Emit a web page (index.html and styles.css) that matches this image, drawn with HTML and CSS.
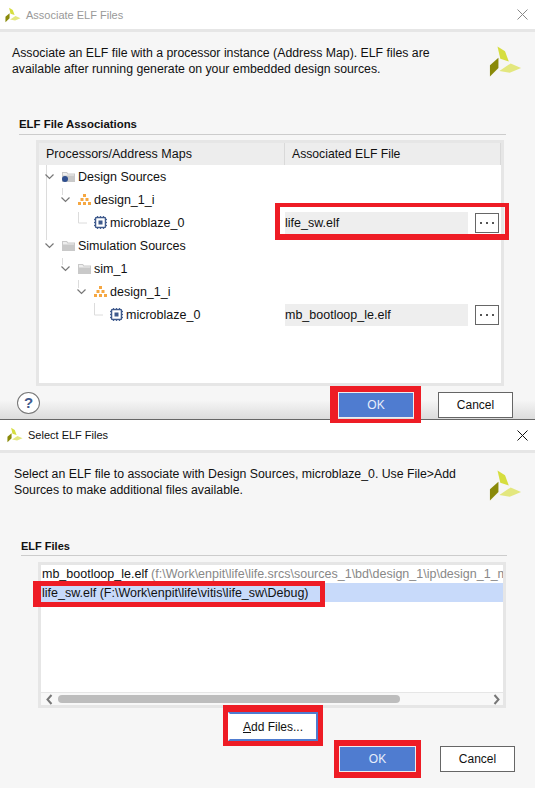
FILE: index.html
```html
<!DOCTYPE html>
<html lang="en">
<head>
  <meta charset="UTF-8">
  <meta name="viewport" content="width=device-width, initial-scale=1.0">
  <title>Associate ELF Files</title>
  <link rel="stylesheet" href="styles.css">
</head>
<body>
  <svg class="defs" width="0" height="0">
    <symbol id="logo" viewBox="8 6 35 34">
      <polygon points="17,7 25,12 29,23 20,20" fill="#d6de3f"/>
      <polygon points="18,19 18,30 9,39 9,27" fill="#8a8a0a"/>
      <polygon points="19,33 31,25 42,30 30,35" fill="#e3e77e"/>
    </symbol>
    <symbol id="chevron" viewBox="0 0 9 6">
      <path d="M0.500 0.500l4 4 4-4" fill="none" stroke="#777" stroke-width="1.200"/>
    </symbol>
    <symbol id="folder" viewBox="0 0 13 11">
      <path d="M0 1h5l1 1.500h7V11H0z" fill="#c9c9c9"/>
      <path d="M1 2h3.500l1 1.500H12v1H1z" fill="#eee"/>
    </symbol>
    <symbol id="hier" viewBox="0 0 13 11">
      <g fill="#f5a742">
        <rect x="5" y="0" width="3" height="3"/>
        <rect x="2.500" y="4" width="3" height="3"/>
        <rect x="7.500" y="4" width="3" height="3"/>
        <rect x="0" y="8" width="3" height="3"/>
        <rect x="5" y="8" width="3" height="3"/>
        <rect x="10" y="8" width="3" height="3"/>
      </g>
    </symbol>
    <symbol id="chip" viewBox="0 0 13 13">
      <path d="M3.500 0v13M6.500 0v13M9.500 0v13M0 3.500h13M0 6.500h13M0 9.500h13" stroke="#4a6496"/>
      <rect x="1.500" y="1.500" width="10" height="10" rx="1" fill="#fff" stroke="#3f5a8c" stroke-width="1.500"/>
      <rect x="4.500" y="4.500" width="4" height="4" fill="#3f5a8c"/>
    </symbol>
    <symbol id="ellipsis" viewBox="0 0 14 2">
      <rect x="0" y="0" width="2" height="2" fill="#555"/>
      <rect x="6" y="0" width="2" height="2" fill="#555"/>
      <rect x="12" y="0" width="2" height="2" fill="#555"/>
    </symbol>
  </svg>

  <section class="dialog first">
    <header class="titlebar faded">
      <svg class="title-logo"><use href="#logo"/></svg>
      <span class="title-text">Associate ELF Files</span>
      <svg class="close" viewBox="0 0 11 11"><path d="M0.500 0.500l10 10M10.500 0.500l-10 10" stroke="currentColor" fill="none"/></svg>
    </header>
    <div class="content">
      <div class="intro">
        <p>Associate an ELF file with a processor instance (Address Map). ELF files are<br>available after running generate on your embedded design sources.</p>
        <svg class="big-logo"><use href="#logo"/></svg>
      </div>
      <h2 class="group-title">ELF File Associations</h2>
      <div class="panel assoc-panel">
        <div class="table-head">
          <div class="col-tree">Processors/Address Maps</div>
          <div class="col-file">Associated ELF File</div>
        </div>
        <div class="table-body">
          <svg class="guides" width="200" height="170">
            <path d="M7.500 0V75M23.500 23V30M39.500 47V58H48M23.500 93V100M39.500 115V123M55.500 138V150H64" stroke="#dcdcdc" fill="none"/>
          </svg>
          <div class="row">
            <div class="col-tree lvl0"><svg class="chev"><use href="#chevron"/></svg><span class="node-icon design-folder"><svg><use href="#folder"/></svg></span>Design Sources</div>
          </div>
          <div class="row">
            <div class="col-tree lvl1"><svg class="chev"><use href="#chevron"/></svg><svg class="node-icon"><use href="#hier"/></svg>design_1_i</div>
          </div>
          <div class="row">
            <div class="col-tree lvl2"><svg class="chip"><use href="#chip"/></svg>microblaze_0</div>
            <div class="col-file"><div class="file-box">life_sw.elf</div><button class="dots"><svg><use href="#ellipsis"/></svg></button></div>
          </div>
          <div class="row">
            <div class="col-tree lvl0"><svg class="chev"><use href="#chevron"/></svg><svg class="node-icon"><use href="#folder"/></svg>Simulation Sources</div>
          </div>
          <div class="row">
            <div class="col-tree lvl1"><svg class="chev"><use href="#chevron"/></svg><svg class="node-icon"><use href="#folder"/></svg>sim_1</div>
          </div>
          <div class="row">
            <div class="col-tree lvl2b"><svg class="chev"><use href="#chevron"/></svg><svg class="node-icon"><use href="#hier"/></svg>design_1_i</div>
          </div>
          <div class="row">
            <div class="col-tree lvl3"><svg class="chip"><use href="#chip"/></svg>microblaze_0</div>
            <div class="col-file"><div class="file-box">mb_bootloop_le.elf</div><button class="dots"><svg><use href="#ellipsis"/></svg></button></div>
          </div>
        </div>
      </div>
      <footer class="buttons first-buttons">
        <span class="help">?</span>
        <button class="btn primary">OK</button>
        <button class="btn">Cancel</button>
      </footer>
    </div>
  </section>

  <section class="dialog second">
    <header class="titlebar">
      <svg class="title-logo"><use href="#logo"/></svg>
      <span class="title-text">Select ELF Files</span>
      <svg class="close" viewBox="0 0 11 11"><path d="M0.500 0.500l10 10M10.500 0.500l-10 10" stroke="currentColor" fill="none"/></svg>
    </header>
    <div class="content">
      <div class="intro">
        <p>Select an ELF file to associate with Design Sources, microblaze_0. Use File&gt;Add<br>Sources to make additional files available.</p>
        <svg class="big-logo"><use href="#logo"/></svg>
      </div>
      <h2 class="group-title">ELF Files</h2>
      <div class="panel files-panel">
        <div class="file-list">
          <div class="file-row">mb_bootloop_le.elf <span class="path">(f:\Work\enpit\life\life.srcs\sources_1\bd\design_1\ip\design_1_m</span></div>
          <div class="file-row selected">life_sw.elf (F:\Work\enpit\life\vitis\life_sw\Debug)</div>
        </div>
        <div class="scrollbar">
          <svg class="arrow" viewBox="0 0 7 11"><path d="M5.500 1L1.500 5.500l4 4.500" fill="none" stroke="#777" stroke-width="2"/></svg>
          <div class="track"><div class="thumb"></div></div>
          <svg class="arrow" viewBox="0 0 7 11"><path d="M1.500 1l4 4.500-4 4.500" fill="none" stroke="#777" stroke-width="2"/></svg>
        </div>
      </div>
      <div class="add-line"><button class="btn add"><u>A</u>dd Files...</button></div>
      <footer class="buttons second-buttons">
        <button class="btn primary">OK</button>
        <button class="btn">Cancel</button>
      </footer>
    </div>
  </section>

  <!-- red annotation boxes drawn over the screenshot -->
  <div class="mark mark-file"></div>
  <div class="mark mark-ok1"></div>
  <div class="mark mark-list"></div>
  <div class="mark mark-add"></div>
  <div class="mark mark-ok2"></div>
</body>
</html>
```

FILE: styles.css
```css
* {
  box-sizing: border-box;
}

html, body {
  height: 100%;
}

body {
  position: relative;
  margin: 0;
  width: 535px;
  height: 788px;
  overflow: hidden;
  background-color: #f6f6f6;
  font-family: "Liberation Sans", Arial, sans-serif;
  font-size: 12px;
  color: #111;
}

.defs {
  position: absolute;
}

.dialog {
  display: flex;
  flex-direction: column;
}

.first {
  height: 419px;
}

.second {
  height: 369px;
  border-top: 1px solid #666;
}

.titlebar {
  display: flex;
  align-items: center;
  height: 29px;
  padding: 0 6px 0 5px;
  background-color: #fff;
  border-bottom: 3px solid #e6e6e6;
  box-sizing: content-box;
}

.second .titlebar {
  height: 30px;
  padding-left: 7px;
}

.title-logo {
  width: 16px;
  height: 16px;
  margin-right: 5px;
}

.title-text {
  flex: 1;
  font-size: 11px;
  color: #111;
}

.faded .title-text {
  color: #999;
}

.close {
  width: 11px;
  height: 11px;
  margin-right: 1px;
  color: #111;
}

.faded .close {
  color: #888;
}

.content {
  flex: 1;
  display: flex;
  flex-direction: column;
}

.first .content {
  background: linear-gradient(to bottom, #f6f6f6 0, #f6f6f6 368px, #dcdcdc 100%);
}

.intro {
  display: flex;
  justify-content: space-between;
  height: 66px;
  padding: 13px 13px 0 12px;
}

.second .intro {
  height: 67px;
  padding: 13px 13px 0 14px;
}

.intro p {
  margin: 0;
  font-size: 12.3px;
  line-height: 16px;
}

.big-logo {
  width: 33px;
  height: 33px;
}

.second .big-logo {
  margin-top: 3px;
}

.group-title {
  margin: 19px 29px 0 19px;
  padding-bottom: 2px;
  border-bottom: 1px solid #ccc;
  font-size: 11.4px;
  line-height: 15px;
}

.second .group-title {
  margin: 19px 28px 0 21px;
  padding-bottom: 1px;
  font-size: 11px;
}

.panel {
  border: 3px solid #e6e6e6;
  background-color: #fff;
}

.assoc-panel {
  height: 246px;
  margin: 5px 31px 0 36px;
  font-size: 12.5px;
}

.table-head {
  display: flex;
  height: 22px;
  line-height: 22px;
  background-color: #ededed;
}

.table-head .col-tree {
  width: 246px;
  padding-left: 7px;
  border-right: 1px solid #d9d9d9;
}

.table-head .col-file {
  flex: 1;
  padding-left: 7px;
  border-right: 1px solid #d9d9d9;
  font-size: 12.2px;
}

.table-body {
  position: relative;
}

.guides {
  position: absolute;
  top: 0;
  left: 0;
}

.row {
  position: relative;
  display: flex;
  align-items: center;
  height: 23px;
}

.row .col-tree {
  display: flex;
  align-items: center;
  width: 246px;
  white-space: nowrap;
}

.lvl0 {
  padding-left: 6px;
}

.lvl1 {
  padding-left: 22px;
}

.lvl2 {
  padding-left: 55px;
}

.lvl2b {
  padding-left: 38px;
}

.lvl3 {
  padding-left: 71px;
}

.chev {
  width: 9px;
  height: 6px;
  margin-right: 8px;
}

.node-icon {
  display: inline-block;
  position: relative;
  width: 13px;
  height: 11px;
  margin-right: 3px;
}

.node-icon svg {
  display: block;
  width: 13px;
  height: 11px;
}

.design-folder::after {
  content: "";
  position: absolute;
  left: 0;
  bottom: 0;
  width: 6px;
  height: 6px;
  border-radius: 50%;
  background-color: #2f4f8f;
}

.chip {
  width: 13px;
  height: 13px;
  margin-right: 3px;
}

.row .col-file {
  flex: 1;
  display: flex;
  align-items: center;
}

.file-box {
  width: 183px;
  height: 22px;
  line-height: 22px;
  background-color: #eeeeee;
}

.dots {
  display: flex;
  align-items: center;
  justify-content: center;
  width: 24px;
  height: 20px;
  margin-left: 7px;
  padding: 0;
  border: 1px solid #666;
  background-color: #fff;
}

.dots svg {
  width: 14px;
  height: 2px;
}

.buttons {
  display: flex;
  align-items: center;
}

.first-buttons {
  padding: 6px 22px 0 17px;
}

.help {
  align-self: flex-start;
  width: 23px;
  height: 22px;
  margin-right: auto;
  border: 1px solid #777;
  border-radius: 50%;
  background-color: #fff;
  text-align: center;
  line-height: 20px;
  font-size: 15px;
  font-weight: bold;
  color: #3f5a8c;
}

.btn {
  width: 75px;
  height: 26px;
  padding: 0;
  border: 1px solid #666;
  background-color: #fff;
  font-family: inherit;
  font-size: 12px;
  color: #111;
}

.buttons .primary {
  width: 76px;
  margin-right: 24px;
  border: 1px solid #eee;
  background-color: #4f7cd0;
  color: #e8eefb;
}

.second-buttons .primary {
  width: 77px;
}

.files-panel {
  display: flex;
  flex-direction: column;
  height: 146px;
  margin: 6px 29px 0 38px;
  font-size: 12.5px;
}

.file-list {
  flex: 1;
  overflow: hidden;
}

.file-row {
  height: 18px;
  padding-left: 1px;
  line-height: 18px;
  white-space: nowrap;
  overflow: hidden;
}

.path {
  color: #888;
}

.selected {
  height: 19px;
  line-height: 20px;
  background-color: #c8dafa;
}

.scrollbar {
  display: flex;
  align-items: center;
  height: 13px;
  padding: 0 3px 0 5px;
  border-top: 1px solid #e6e6e6;
  background-color: #f8f8f8;
}

.arrow {
  width: 7px;
  height: 11px;
}

.track {
  flex: 1;
  padding: 0 5px;
}

.thumb {
  width: 342px;
  height: 8px;
  border-radius: 4px;
  background-color: #bdbdbd;
}

.add-line {
  display: flex;
  padding: 4px 0 0 228px;
}

.add {
  width: 90px;
  height: 29px;
  border: 2px solid #4f7cd0;
  border-left-color: #fff;
}

.second-buttons {
  justify-content: flex-end;
  padding: 5px 20px 0 0;
}

.mark {
  position: absolute;
  border-style: solid;
  border-color: #ee1c25;
  border-width: 5px;
}

.mark-file {
  left: 275px;
  top: 203px;
  width: 234px;
  height: 37px;
  border-width: 4px 4px 6px 5px;
}

.mark-ok1 {
  left: 330px;
  top: 386px;
  width: 91px;
  height: 37px;
  border-width: 6px 7px 4px 8px;
}

.mark-list {
  left: 33px;
  top: 581px;
  width: 292px;
  height: 26px;
  border-left-width: 8px;
}

.mark-add {
  left: 223px;
  top: 705px;
  width: 100px;
  height: 41px;
  border-width: 7px 5px 5px;
}

.mark-ok2 {
  left: 334px;
  top: 740px;
  width: 87px;
  height: 38px;
  border-width: 6px 5px 6px 5px;
}
```
